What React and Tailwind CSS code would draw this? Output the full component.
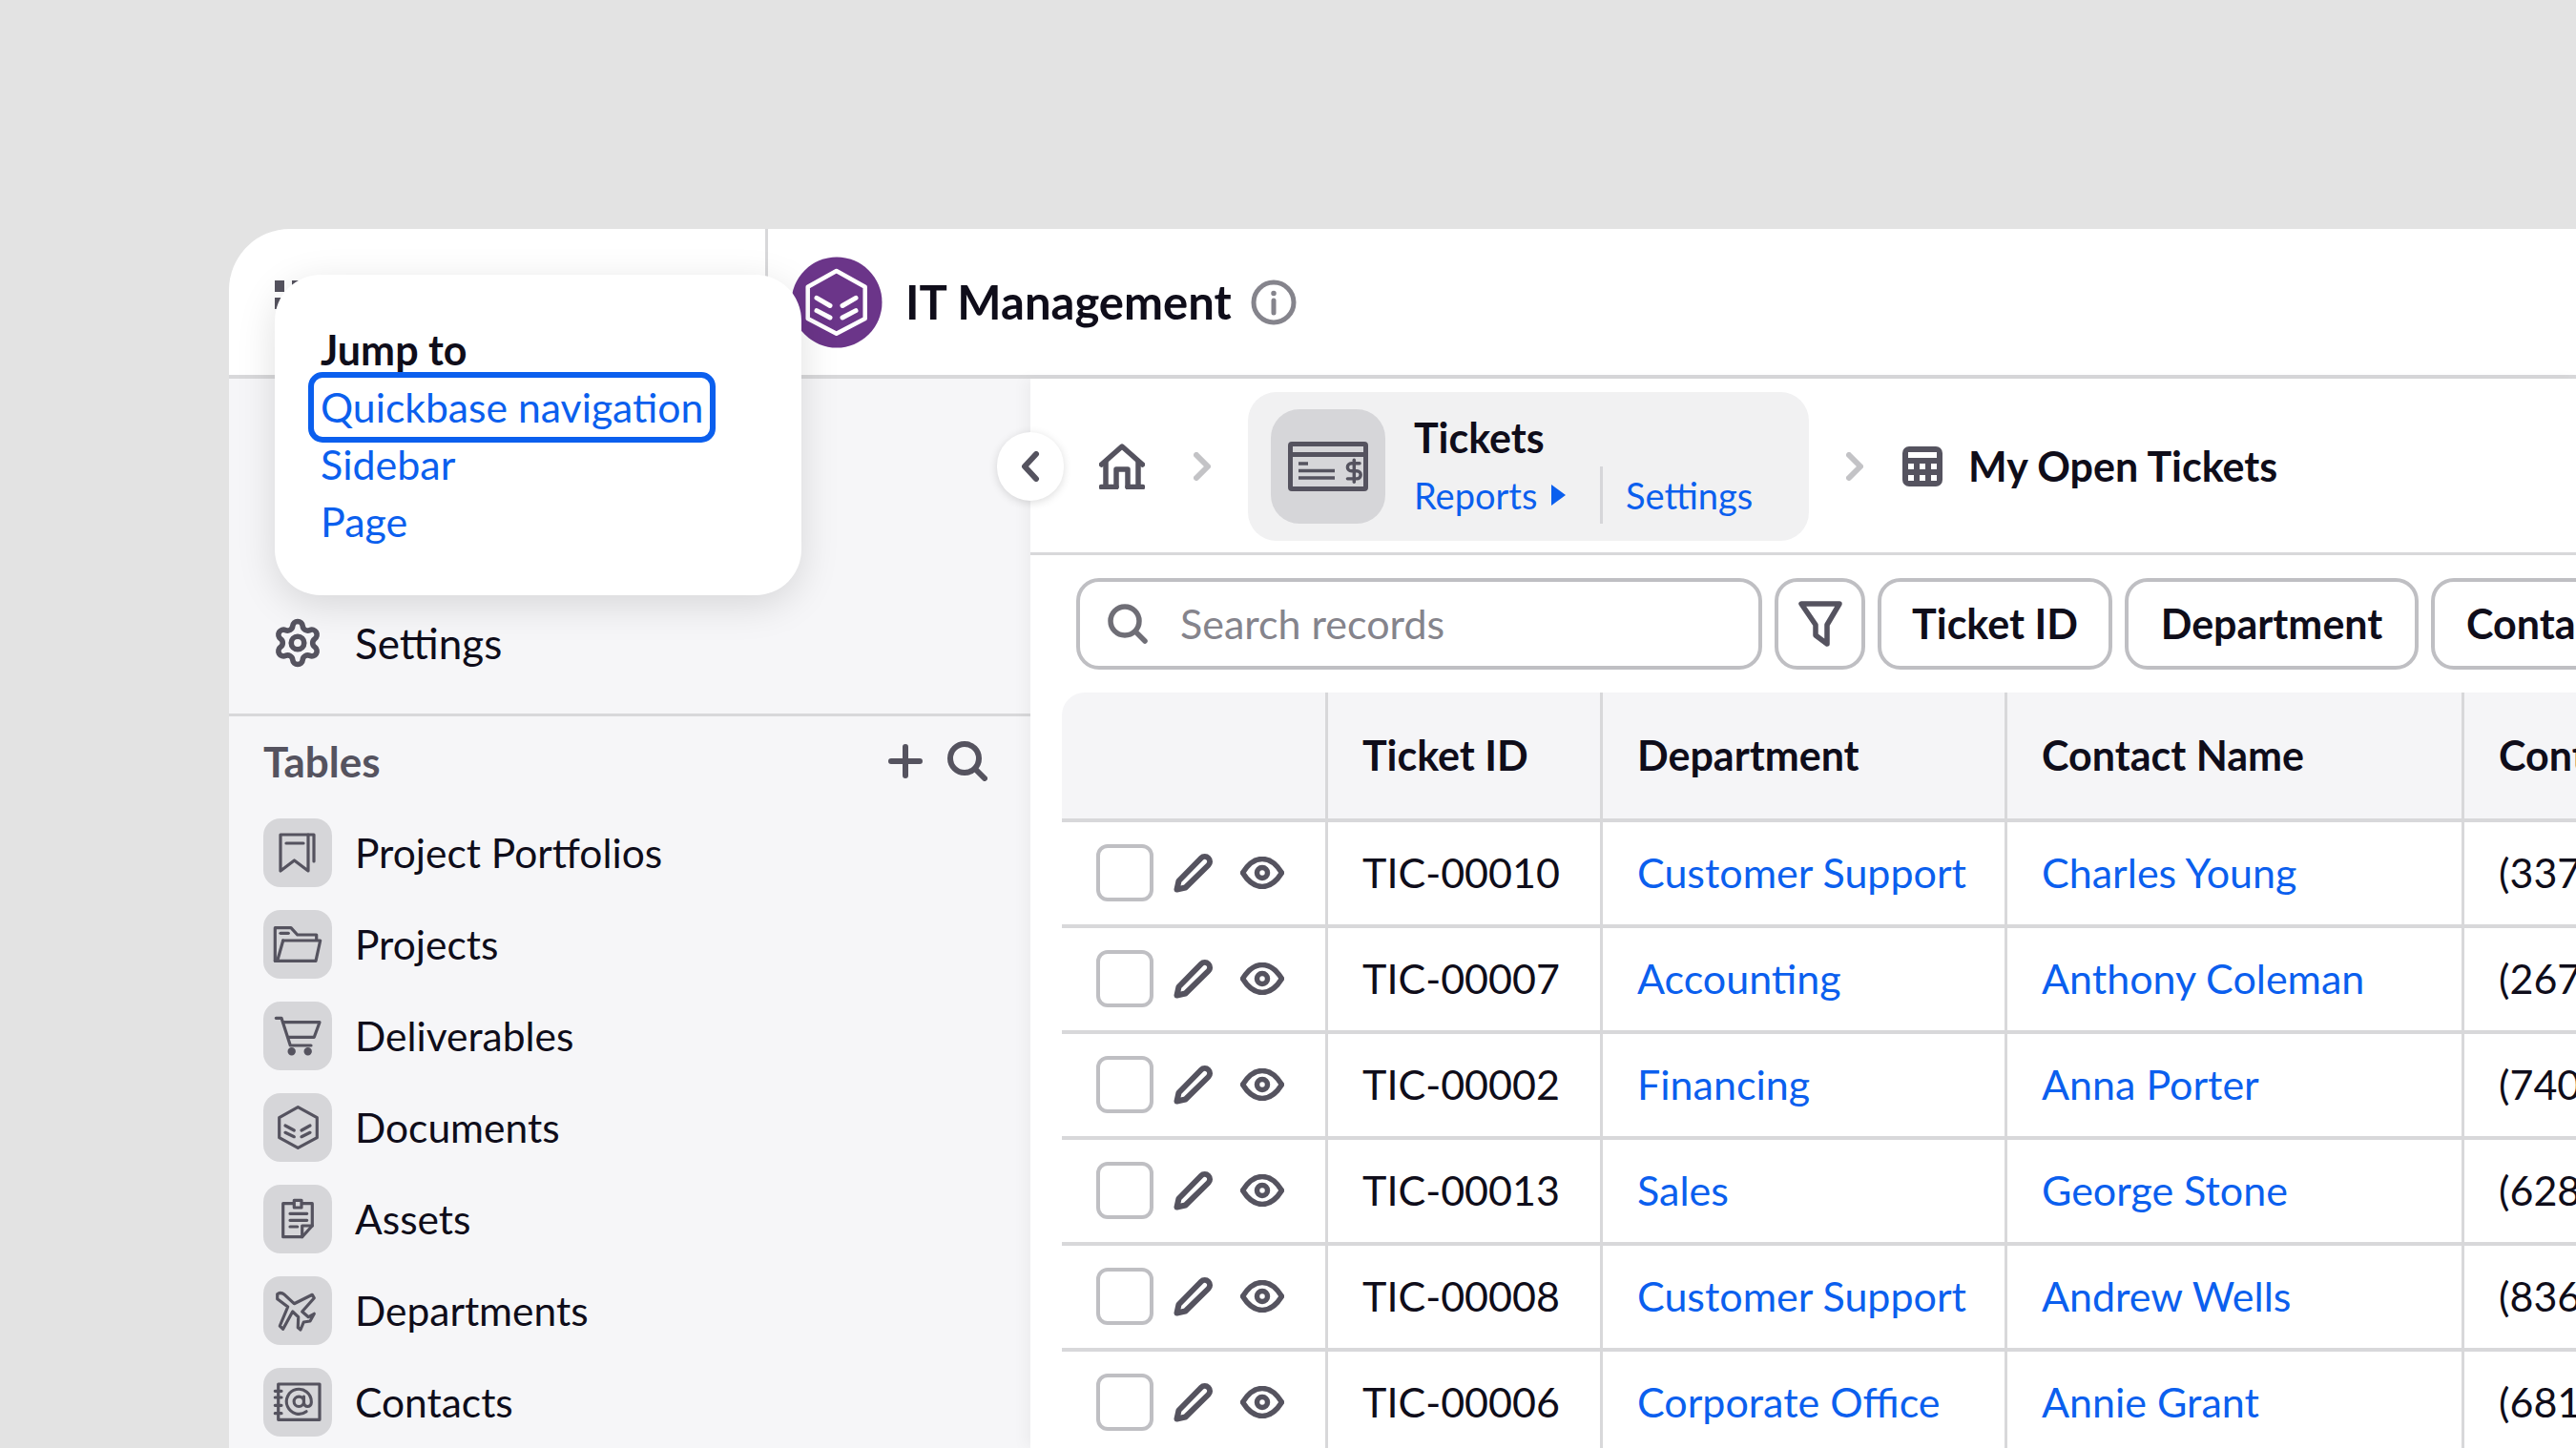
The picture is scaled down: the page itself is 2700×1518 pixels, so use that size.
import { Settings } from "lucide-react";

const rows = [
  { id: "TIC-00010", dept: "Customer Support", name: "Charles Young", phone: "(337) 555-0142" },
  { id: "TIC-00007", dept: "Accounting", name: "Anthony Coleman", phone: "(267) 555-0178" },
  { id: "TIC-00002", dept: "Financing", name: "Anna Porter", phone: "(740) 555-0119" },
  { id: "TIC-00013", dept: "Sales", name: "George Stone", phone: "(628) 555-0163" },
  { id: "TIC-00008", dept: "Customer Support", name: "Andrew Wells", phone: "(836) 555-0127" },
  { id: "TIC-00006", dept: "Corporate Office", name: "Annie Grant", phone: "(681) 555-0195" },
];

const TileIcon = ({ children }) => (
  <div className="w-[72px] h-[72px] rounded-[18px] bg-[#d6d6d9] shrink-0">
    <svg width="72" height="72" viewBox="0 0 72 72" fill="none" stroke="#55535f" strokeWidth="3.2" strokeLinejoin="round" strokeLinecap="round">
      {children}
    </svg>
  </div>
);

const tables = [
  {
    label: "Project Portfolios",
    icon: (
      <>
        <path d="M18 17H47V55L32.5 44L18 55Z" />
        <path d="M47 17H53V45" />
        <path d="M24 26H42" />
      </>
    ),
  },
  {
    label: "Projects",
    icon: (
      <>
        <path d="M12.3 53.3V18.7H29L35.7 26H55.7V31" />
        <path d="M20.7 32H59.7L55 53.3H12.3" />
        <path d="M20.7 32L14.7 53.3" />
        <path d="M18 24.3H26.3" />
      </>
    ),
  },
  {
    label: "Deliverables",
    icon: (
      <>
        <path d="M13.3 17.3H19L28.3 46H50" />
        <path d="M20.7 21.7H59L53.3 37.3H26.3" />
        <circle cx="29.7" cy="52.3" r="2.6" fill="#55535f" />
        <circle cx="46.7" cy="52.3" r="2.6" fill="#55535f" />
      </>
    ),
  },
  {
    label: "Documents",
    icon: (
      <>
        <path d="M36.3 14.7L56.3 25.7V46.7L36.3 57.3L16.7 46.7V25.7Z" />
        <path d="M23 34L32.3 39M23 41.3L32.3 45.7M40 39L49 34M40 45.7L49 41.3" />
      </>
    ),
  },
  {
    label: "Assets",
    icon: (
      <>
        <path d="M40.7 54.7H20.7V19.7H51.3V43L40.7 54.7Z" />
        <path d="M40.7 54.7V43H51.3" />
        <rect x="32.3" y="16.3" width="7.7" height="7.7" fill="#d6d6d9" />
        <path d="M28 30.3H45.7M28 37.3H45.7M28 44H35.7" />
      </>
    ),
  },
  {
    label: "Departments",
    icon: (
      <path d="M14.7 18.7Q18 16 22.3 19.3L32.3 28.7L51.3 19.3L53.3 22.7L40.7 37L47.3 42.7L53.3 39.3L49 47L42.3 48L39 56L36.3 53.7L36.7 42.7L30.7 37L20.7 55.3L17.3 52L25.7 32L14.7 23.7Z" />
    ),
  },
  {
    label: "Contacts",
    icon: (
      <>
        <rect x="15.7" y="17" width="43.3" height="37.3" />
        <path d="M12.3 24.3H19M12.3 31H19M12.3 39.3H19M12.3 47.7H19" />
        <g transform="translate(21.7 19.7) scale(1.3)" strokeWidth="2.4">
          <circle cx="12" cy="12" r="4" />
          <path d="M16 8v5a3 3 0 0 0 6 0v-1a10 10 0 1 0-4 8" />
        </g>
      </>
    ),
  },
];

const Chevron = ({ className }) => (
  <svg className={className} width="18" height="30" viewBox="0 0 18 30" fill="none" stroke="#c3c3c6" strokeWidth="6" strokeLinecap="round" strokeLinejoin="round">
    <path d="M3 3L15 15L3 27" />
  </svg>
);

const Pencil = () => (
  <svg width="42" height="42" viewBox="0 0 42 42" fill="none" stroke="#55535f" strokeWidth="6" strokeLinejoin="round">
    <path d="M3.5 38.5L5.5 29.5L29 5.5a5.3 5.3 0 0 1 7.5 7.5L12.5 36.5Z" />
  </svg>
);

const Eye = () => (
  <svg width="46" height="34" viewBox="0 0 46 34" fill="none" stroke="#55535f" strokeWidth="5.5">
    <path d="M2.5 17C9 6.5 16 2.5 23 2.5C30 2.5 37 6.5 43.5 17C37 27.5 30 31.5 23 31.5C16 31.5 9 27.5 2.5 17Z" />
    <circle cx="23" cy="17" r="5.5" />
  </svg>
);

const FilterChip = ({ label, className }) => (
  <button className={`h-[96px] shrink-0 rounded-[24px] border-[4px] border-[#bfbfc3] bg-white font-bold text-[43px] text-[#0f0d1a] ${className}`}>
    {label}
  </button>
);

const App = () => {
  return (
    <div className="relative w-[2700px] h-[1518px] overflow-hidden bg-[#e3e3e3] pl-[240px] pt-[240px] font-['Lato','Liberation_Sans',sans-serif] text-[43px] text-[#0f0d1a]">
      <div className="w-[2460px] h-[1278px] bg-white rounded-tl-[64px] overflow-hidden flex flex-col">
        {/* Top bar */}
        <div className="h-[157px] shrink-0 flex border-b-[4px] border-[#d8d8da]">
          <div className="w-[565px] shrink-0 border-r-[3px] border-[#d8d8da] pl-[48px] pt-[54px]">
            <svg width="48" height="48" viewBox="0 0 48 48" fill="#55535f">
              <rect x="0" y="0" width="10" height="12" />
              <rect x="18" y="0" width="10" height="12" />
              <rect x="36" y="0" width="10" height="12" />
              <rect x="0" y="18" width="10" height="12" />
              <rect x="18" y="18" width="10" height="12" />
              <rect x="36" y="18" width="10" height="12" />
            </svg>
          </div>
          <div className="flex items-center pl-[25px]">
            <svg width="96" height="96" viewBox="0 0 96 96" fill="none" className="shrink-0">
              <circle cx="47" cy="48" r="47.5" fill="#6b3589" />
              <path d="M46.7 15L76.7 31.7V65L46.7 80.7L16.7 65V31.7Z" stroke="#fff" strokeWidth="4.5" strokeLinejoin="round" />
              <path d="M26 43.3L40 51.5M26 56.6L40 64M67 43.3L53 51.5M67 56.6L53 64" stroke="#fff" strokeWidth="5" strokeLinecap="round" />
            </svg>
            <span className="ml-[23px] text-[49px] font-bold whitespace-nowrap">IT Management</span>
            <svg className="ml-[20px] shrink-0" width="48" height="48" viewBox="0 0 48 48" fill="none" stroke="#85848c" strokeWidth="5">
              <circle cx="24" cy="24" r="21" />
              <path d="M24 22V35" strokeLinecap="round" />
              <circle cx="24" cy="14.5" r="1.5" fill="#85848c" strokeWidth="2.5" />
            </svg>
          </div>
        </div>

        <div className="flex flex-1 min-h-0">
          {/* Sidebar */}
          <aside className="w-[840px] shrink-0 bg-[#f6f6f8]">
            <div className="h-[354px] border-b-[3px] border-[#d8d8da] pl-[45px] pb-[41px] flex flex-col justify-end gap-[48px]">
              <div className="ml-[3px] w-[48px] h-[48px] rounded-full border-[5px] border-[#55535f]" />
              <div className="flex items-center gap-[33px]">
                <Settings size={54} color="#55535f" strokeWidth={2.5} />
                <span className="text-[44px]">Settings</span>
              </div>
            </div>
            <div className="pl-[36px] pr-[45px] pt-[23px]">
              <div className="h-[48px] flex items-center justify-between">
                <span className="font-bold text-[44px] text-[#55535f]">Tables</span>
                <div className="flex items-center gap-[26px]">
                  <svg width="36" height="36" viewBox="0 0 36 36" stroke="#55535f" strokeWidth="6" strokeLinecap="round">
                    <path d="M18 3V33M3 18H33" />
                  </svg>
                  <svg width="42" height="42" viewBox="0 0 42 42" fill="none" stroke="#55535f" strokeWidth="6" strokeLinecap="round">
                    <circle cx="18" cy="18" r="15" />
                    <path d="M29 29L39 39" />
                  </svg>
                </div>
              </div>
              <div className="mt-[36px] flex flex-col gap-[24px]">
                {tables.map((t) => (
                  <div key={t.label} className="flex items-center gap-[24px]">
                    <TileIcon>{t.icon}</TileIcon>
                    <span className="text-[42.5px]">{t.label}</span>
                  </div>
                ))}
              </div>
            </div>
          </aside>

          {/* Main */}
          <main className="flex-1 min-w-0 bg-white overflow-hidden shadow-[-6px_0_14px_rgba(0,0,0,0.04)] z-10">
            <div className="h-[185px] pt-[2px] border-b-[3px] border-[#d8d8da] flex items-center pl-[72px]">
              <svg width="48" height="48" viewBox="0 0 48 48" fill="none" stroke="#55535f" strokeWidth="5.5" strokeLinecap="round" strokeLinejoin="round" className="shrink-0">
                <path d="M2.5 22L24 3L45.5 22" />
                <path d="M7 19V45.5M41 19V45.5" />
                <path d="M18 45.5V27H30V45.5" />
                <path d="M2.5 45.5H18M30 45.5H45.5" />
              </svg>
              <Chevron className="ml-[51px] shrink-0" />
              <div className="ml-[39px] w-[588px] h-[156px] shrink-0 rounded-[30px] bg-[#f1f1f2] flex items-center pl-[24px]">
                <div className="w-[120px] h-[120px] rounded-[30px] bg-[#d6d6d9] flex items-center justify-center">
                  <svg width="84" height="52" viewBox="0 0 84 52" fill="none" stroke="#55535f">
                    <rect x="2.5" y="2.5" width="79" height="47" rx="1.5" strokeWidth="5" />
                    <path d="M2 13.5H82" strokeWidth="5" />
                    <path d="M11 23H21" strokeWidth="3.5" />
                    <path d="M11 30.5H49M11 38H49" strokeWidth="3.5" />
                    <g transform="translate(55.5 17) scale(1.15)" strokeWidth="3" strokeLinecap="round" strokeLinejoin="round">
                      <path d="M12 2v20" />
                      <path d="M17 5H9.5a3.5 3.5 0 0 0 0 7h5a3.5 3.5 0 0 1 0 7H6" />
                    </g>
                  </svg>
                </div>
                <div className="ml-[30px] h-[120px] flex flex-col">
                  <div className="h-[60px] leading-[60px] font-bold">Tickets</div>
                  <div className="h-[60px] flex items-center text-[38px] text-[#0b5fee]">
                    <div className="w-[198px] h-full flex items-center border-r-[3px] border-[#d6d6d9]">
                      <span>Reports</span>
                      <svg className="ml-[14px]" width="16" height="24" viewBox="0 0 16 24" fill="#0b5fee">
                        <path d="M1 1L16 12L1 23Z" />
                      </svg>
                    </div>
                    <span className="ml-[24px]">Settings</span>
                  </div>
                </div>
              </div>
              <Chevron className="ml-[39px] shrink-0" />
              <svg className="ml-[41px] shrink-0" width="42" height="42" viewBox="0 0 42 42">
                <rect width="42" height="42" rx="7" fill="#55535f" />
                <rect x="6" y="6" width="30" height="6" fill="#fff" />
                <rect x="6" y="18" width="6" height="6" fill="#fff" />
                <rect x="18" y="18" width="6" height="6" fill="#fff" />
                <rect x="30" y="18" width="6" height="6" fill="#fff" />
                <rect x="6" y="30" width="6" height="6" fill="#fff" />
                <rect x="18" y="30" width="6" height="6" fill="#fff" />
                <rect x="30" y="30" width="6" height="6" fill="#fff" />
              </svg>
              <span className="ml-[27px] font-bold whitespace-nowrap">My Open Tickets</span>
            </div>

            {/* Toolbar */}
            <div className="pl-[48px] pt-[24px] flex gap-[13px]">
              <div className="w-[719px] h-[96px] shrink-0 rounded-[24px] border-[4px] border-[#bfbfc3] flex items-center pl-[29px]">
                <svg width="42" height="42" viewBox="0 0 42 42" fill="none" stroke="#6f6e76" strokeWidth="5.5" strokeLinecap="round">
                  <circle cx="18" cy="18" r="15" />
                  <path d="M29 29L39 39" />
                </svg>
                <span className="ml-[34px] text-[#85848c]">Search records</span>
              </div>
              <div className="w-[95px] h-[96px] shrink-0 rounded-[24px] border-[4px] border-[#bfbfc3] flex items-center justify-center">
                <svg width="46" height="48" viewBox="0 0 46 48" fill="none" stroke="#55535f" strokeWidth="5.5" strokeLinejoin="round">
                  <path d="M3 3H43L30 25V45L18 36V25Z" />
                </svg>
              </div>
              <FilterChip label="Ticket ID" className="w-[246px]" />
              <FilterChip label="Department" className="w-[308px]" />
              <FilterChip label="Contact Name" className="w-[340px] text-left pl-[33px]" />
            </div>

            {/* Table */}
            <div className="ml-[33px] mt-[24px] w-[1700px]">
              <div className="flex h-[136px] bg-[#f5f5f7] rounded-tl-[24px] border-b-[4px] border-[#d8d8da] font-bold">
                <div className="w-[279px] shrink-0 border-r-[3px] border-[#d8d8da]" />
                <div className="w-[288px] shrink-0 border-r-[3px] border-[#d8d8da] pl-[36px] flex items-center">Ticket ID</div>
                <div className="w-[424px] shrink-0 border-r-[3px] border-[#d8d8da] pl-[36px] flex items-center">Department</div>
                <div className="w-[479px] shrink-0 border-r-[3px] border-[#d8d8da] pl-[36px] flex items-center">Contact Name</div>
                <div className="flex-1 pl-[36px] flex items-center whitespace-nowrap">Contact Phone</div>
              </div>
              {rows.map((r) => (
                <div key={r.id} className="flex h-[111px] border-b-[4px] border-[#d8d8da]">
                  <div className="w-[279px] shrink-0 border-r-[3px] border-[#d8d8da] pl-[36px] pb-[2px] flex items-center">
                    <div className="w-[60px] h-[60px] rounded-[12px] border-[4px] border-[#bfbfc3]" />
                    <div className="ml-[21px]"><Pencil /></div>
                    <div className="ml-[28px]"><Eye /></div>
                  </div>
                  <div className="w-[288px] shrink-0 border-r-[3px] border-[#d8d8da] pl-[36px] flex items-center">{r.id}</div>
                  <div className="w-[424px] shrink-0 border-r-[3px] border-[#d8d8da] pl-[36px] flex items-center text-[#0b5fee] whitespace-nowrap">{r.dept}</div>
                  <div className="w-[479px] shrink-0 border-r-[3px] border-[#d8d8da] pl-[36px] flex items-center text-[#0b5fee] whitespace-nowrap">{r.name}</div>
                  <div className="flex-1 pl-[36px] flex items-center whitespace-nowrap">{r.phone}</div>
                </div>
              ))}
            </div>
          </main>
        </div>
      </div>

      {/* Collapse sidebar button */}
      <button className="absolute left-[1045px] top-[453px] z-20 w-[70px] h-[72px] rounded-full bg-white shadow-[0_2px_10px_rgba(0,0,0,0.14)] flex items-center justify-center">
        <svg width="20" height="32" viewBox="0 0 20 32" fill="none" stroke="#55535f" strokeWidth="6" strokeLinecap="round" strokeLinejoin="round">
          <path d="M16 3L4 16L16 29" />
        </svg>
      </button>

      {/* Jump to popover */}
      <div className="absolute left-[288px] top-[288px] z-30 w-[552px] h-[336px] rounded-[48px] bg-white shadow-[0_10px_40px_rgba(0,0,0,0.13)] pl-[48px] pt-[49px]">
        <div className="h-[60px] leading-[60px] font-bold">Jump to</div>
        <a className="block w-fit h-[60px] leading-[60px] px-[6px] -ml-[6px] text-[42.7px] text-[#0b5fee] rounded-[8px] outline-[6px] outline-offset-[1px] outline-solid outline-[#0b5fee]">Quickbase navigation</a>
        <a className="block h-[60px] leading-[60px] text-[#0b5fee]">Sidebar</a>
        <a className="block h-[60px] leading-[60px] text-[#0b5fee]">Page</a>
      </div>
    </div>
  );
};

export default App;
